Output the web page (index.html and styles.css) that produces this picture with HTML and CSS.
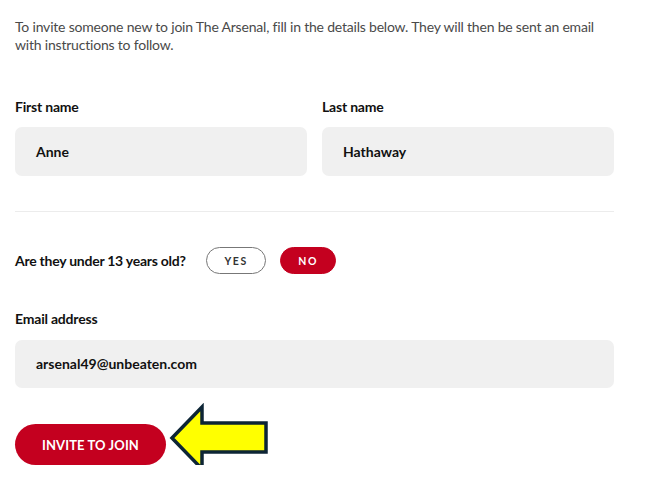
FILE: index.html
```html
<!DOCTYPE html>
<html lang="en">
<head>
<meta charset="utf-8">
<title>Invite to join</title>
<link rel="stylesheet" href="styles.css">
</head>
<body>
<main class="form">
  <p class="intro">To invite someone new to join The Arsenal, fill in the details below. They will then be sent an email with instructions to follow.</p>

  <div class="names">
    <div class="field">
      <label class="label">First name</label>
      <div class="input">Anne</div>
    </div>
    <div class="field">
      <label class="label">Last name</label>
      <div class="input">Hathaway</div>
    </div>
  </div>

  <hr class="divider">

  <div class="question">
    <span class="q-text">Are they under 13 years old?</span>
    <button class="pill pill-outline">YES</button>
    <button class="pill pill-filled">NO</button>
  </div>

  <div class="field email">
    <label class="label">Email address</label>
    <div class="input">arsenal49@unbeaten.com</div>
  </div>

  <div class="actions">
    <button class="invite">INVITE TO JOIN</button>
    <svg class="arrow" width="102" height="70" viewBox="0 0 102 70">
      <polygon points="4,35 34,4 34,20 98,20 98,49 34,49 34,66" fill="#ffff00" stroke="#0d2535" stroke-width="3.5" stroke-linejoin="miter"/>
    </svg>
  </div>
</main>
</body>
</html>
```

FILE: styles.css
```css
* { box-sizing: border-box; }
html, body { margin: 0; padding: 0; background: #fff; }
body {
  font-family: Lato, "Open Sans", "Liberation Sans", sans-serif;
  color: #111;
}
.form {
  width: 646px;
  padding: 18px 32px 0 15px;
}
.intro {
  margin: 0;
  font-size: 14px;
  line-height: 18px;
  color: #4a4a4a;
  letter-spacing: -0.2px;
  width: 600px;
}
.names {
  display: grid;
  grid-template-columns: 1fr 1fr;
  column-gap: 15px;
  margin-top: 44px;
}
.field { display: flex; flex-direction: column; }
.label {
  font-size: 14px;
  line-height: 18px;
  font-weight: 700;
  color: #111;
  margin-bottom: 11px;
  letter-spacing: -0.2px;
}
.input {
  height: 49px;
  background: #f0f0f0;
  border-radius: 7px;
  padding: 0 21px;
  display: flex;
  align-items: center;
  font-size: 14px;
  font-weight: 700;
  color: #111;
  letter-spacing: 0;
  padding-bottom: 1px;
}
.divider {
  border: 0;
  border-top: 1.5px solid #ececec;
  margin: 35px 0 0 0;
}
.question {
  display: flex;
  align-items: center;
  margin-top: 35px;
  height: 27px;
}
.q-text {
  font-size: 14px;
  font-weight: 700;
  letter-spacing: -0.25px;
  margin-right: 20px;
}
.pill {
  height: 27px;
  border-radius: 14px;
  font-family: Lato, "Open Sans", sans-serif;
  font-size: 10.5px;
  font-weight: 700;
  letter-spacing: 1.6px;
  padding: 0 0 0 1px;
  display: flex;
  align-items: center;
  justify-content: center;
}
.pill-outline {
  width: 60px;
  background: #fff;
  border: 1px solid #777;
  color: #333;
  margin-right: 14px;
}
.pill-filled {
  width: 56px;
  background: #c4001f;
  border: 1px solid #c4001f;
  color: #fff;
}
.email { margin-top: 36px; }
.email .label { margin-bottom: 12px; }
.email .input { height: 48px; }
.actions {
  position: relative;
  margin-top: 36px;
  height: 41px;
}
.invite {
  width: 151px;
  height: 41px;
  border: 0;
  border-radius: 21px;
  background: #c4001f;
  color: #fff;
  font-family: Lato, "Open Sans", sans-serif;
  font-size: 13px;
  font-weight: 700;
  letter-spacing: 0.1px;
  padding: 0;
}
.arrow {
  position: absolute;
  left: 153px;
  top: -21px;
}
```
